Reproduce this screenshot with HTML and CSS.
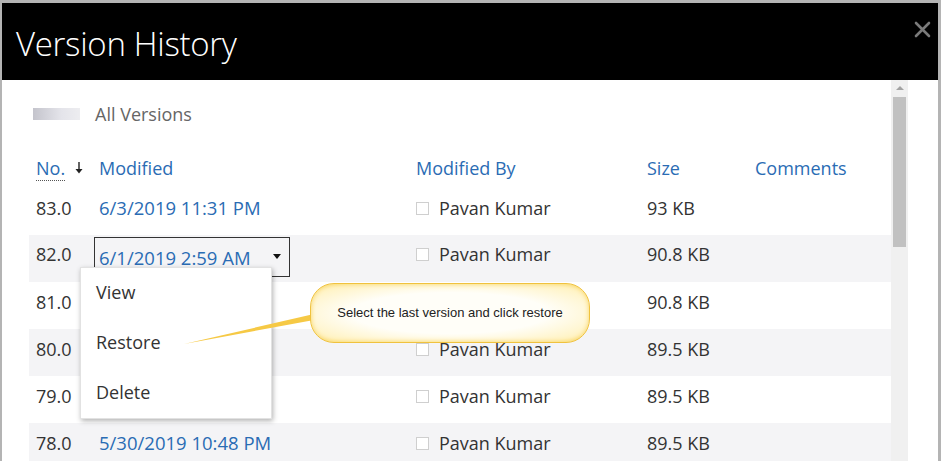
FILE: index.html
```html
<!DOCTYPE html>
<html lang="en">
<head>
    <meta charset="UTF-8">
    <meta name="viewport" content="width=device-width, initial-scale=1.0">
    <title>Version History</title>
    <link rel="stylesheet" href="styles.css">
</head>
<body>
    <div class="dialog">
        <div class="dialog-header">
            <h1>Version History</h1>
            <span class="close">
                <svg width="17" height="17" viewBox="0 0 17 17"><path d="M2 2 L15 15 M15 2 L2 15" stroke="#7a7a7a" stroke-width="2.6" stroke-linecap="round"/></svg>
            </span>
        </div>

        <div class="dialog-body">
            <div class="content">
                <div class="filter">
                    <span class="blur"></span>
                    <span>All Versions</span>
                </div>

                <div class="grid">
                    <div class="row head">
                        <div class="cell no"><span class="abbr">No.</span>
                            <svg class="sort" width="8" height="12" viewBox="0 0 8 12"><path d="M4 0 V10" stroke="#222" stroke-width="1.4"/><path d="M0.5 7 L4 11.5 L7.5 7 Z" fill="#222"/></svg>
                        </div>
                        <div class="cell date">Modified</div>
                        <div class="cell by">Modified By</div>
                        <div class="cell size">Size</div>
                        <div class="cell comments">Comments</div>
                    </div>

                    <div class="row">
                        <div class="cell no">83.0</div>
                        <div class="cell date"><a>6/3/2019 11:31 PM</a></div>
                        <div class="cell by"><span class="check"></span>Pavan Kumar</div>
                        <div class="cell size">93 KB</div>
                        <div class="cell comments"></div>
                    </div>

                    <div class="row alt open">
                        <div class="cell no">82.0</div>
                        <div class="cell date">
                            <div class="picker"><a>6/1/2019 2:59 AM</a><span class="caret"></span></div>
                        </div>
                        <div class="cell by"><span class="check"></span>Pavan Kumar</div>
                        <div class="cell size">90.8 KB</div>
                        <div class="cell comments"></div>

                        <div class="menu">
                            <div class="menu-item">View</div>
                            <div class="menu-item">Restore</div>
                            <div class="menu-item">Delete</div>
                        </div>
                    </div>

                    <!-- date and author of this row sit under the menu and the note -->
                    <div class="row">
                        <div class="cell no">81.0</div>
                        <div class="cell date"></div>
                        <div class="cell by"></div>
                        <div class="cell size">90.8 KB</div>
                        <div class="cell comments"></div>
                    </div>

                    <div class="row alt">
                        <div class="cell no">80.0</div>
                        <div class="cell date"></div>
                        <div class="cell by"><span class="check"></span>Pavan Kumar</div>
                        <div class="cell size">89.5 KB</div>
                        <div class="cell comments"></div>
                    </div>

                    <div class="row">
                        <div class="cell no">79.0</div>
                        <div class="cell date"></div>
                        <div class="cell by"><span class="check"></span>Pavan Kumar</div>
                        <div class="cell size">89.5 KB</div>
                        <div class="cell comments"></div>
                    </div>

                    <div class="row alt">
                        <div class="cell no">78.0</div>
                        <div class="cell date"><a>5/30/2019 10:48 PM</a></div>
                        <div class="cell by"><span class="check"></span>Pavan Kumar</div>
                        <div class="cell size">89.5 KB</div>
                        <div class="cell comments"></div>
                    </div>
                </div>
            </div>

            <div class="scrollbar">
                <div class="scroll-up"></div>
                <div class="thumb"></div>
            </div>
            <div class="gutter"></div>
        </div>

        <!-- annotation added on top of the screenshot -->
        <svg class="tail" width="132" height="36" viewBox="0 0 132 36">
            <path d="M0 32 L130 2 L130 8 Z" fill="#f6c945"/>
        </svg>
        <div class="callout">Select the last version and click restore</div>
    </div>
</body>
</html>
```

FILE: styles.css
```css
html, body {
    margin: 0;
    height: 100%;
    overflow: hidden;
}
body {
    background-color: #fff;
    font-family: "Segoe UI", "Open Sans", sans-serif;
}
.dialog {
    position: relative;
    width: 936px;
    height: 458px;
    overflow: hidden;
    border-top: 3px solid #b4b4b4;
    border-left: 2px solid #b4b4b4;
    border-right: 3px solid #b4b4b4;
}
.dialog-header {
    height: 77px;
    background: #000;
    color: #fff;
    position: relative;
}
.dialog-header h1 {
    margin: 0;
    padding: 21px 0 0 14px;
    font-size: 33px;
    font-weight: 300;
    line-height: 40px;
    letter-spacing: -0.3px;
}
.close {
    position: absolute;
    top: 18px;
    right: 7px;
    width: 17px;
    height: 17px;
}
.dialog-body {
    display: flex;
    height: 381px;
}
.content {
    width: 889px;
    padding-top: 22px;
}
.filter {
    display: flex;
    align-items: center;
    height: 24px;
    padding-left: 31px;
    font-size: 18px;
    color: #666;
}
.blur {
    width: 47px;
    height: 12px;
    margin-right: 15px;
    background: linear-gradient(to right, #c4c4cc, #e4e4ea 60%, #ededf0);
    filter: blur(0.6px);
}
.grid {
    margin: 24px 0 0 27px;
    font-size: 18px;
    color: #333;
}
.row {
    display: flex;
    height: 47px;
    position: relative;
}
.row.alt {
    background: #f4f4f6;
}
.row.head {
    height: 38px;
    color: #2a6cb4;
}
.cell {
    padding-top: 8px;
    line-height: 24px;
    white-space: nowrap;
    box-sizing: border-box;
}
.head .cell {
    padding-top: 6px;
}
.open .cell {
    padding-top: 7px;
}
.no {
    width: 70px;
    padding-left: 7px;
}
.date {
    width: 317px;
}
.date a {
    color: #2a6cb4;
    font-size: 18.5px;
}
.by {
    width: 231px;
    display: flex;
    align-items: flex-start;
}
.size {
    width: 108px;
}
.comments {
    flex: 1;
}
.abbr {
    border-bottom: 1px dotted #555;
}
.sort {
    margin-left: 5px;
    vertical-align: 1px;
}
.check {
    width: 11px;
    height: 11px;
    border: 1px solid #cfcfcf;
    background: #fff;
    margin: 6px 10px 0 0;
    flex-shrink: 0;
}
.picker {
    position: relative;
    width: 196px;
    height: 40px;
    box-sizing: border-box;
    margin: -5px 0 0 -5px;
    padding: 8px 0 0 4px;
    border: 1px solid #333;
}
.caret {
    position: absolute;
    right: 8px;
    top: 16px;
    border-left: 4px solid transparent;
    border-right: 4px solid transparent;
    border-top: 5px solid #111;
}
.menu {
    position: absolute;
    left: 51px;
    top: 32px;
    width: 190px;
    background: #fff;
    border: 1px solid #e2e2e2;
    box-shadow: 1px 2px 5px rgba(0, 0, 0, 0.3);
    z-index: 5;
}
.menu-item {
    height: 50px;
    line-height: 48px;
    padding-left: 15px;
    color: #333;
}
.scrollbar {
    width: 17px;
    background: #f0f0f0;
}
.scroll-up {
    height: 17px;
    position: relative;
}
.scroll-up::after {
    content: "";
    position: absolute;
    left: 5px;
    top: 6px;
    border-left: 4px solid transparent;
    border-right: 4px solid transparent;
    border-bottom: 4px solid #a3a3a3;
}
.thumb {
    height: 150px;
    margin: 0 2px;
    background: #c1c1c1;
}
.gutter {
    flex: 1;
    background: #fff;
}
.tail {
    position: absolute;
    left: 182px;
    top: 309px;
    z-index: 10;
}
.callout {
    position: absolute;
    left: 308px;
    top: 280px;
    width: 278px;
    height: 58px;
    border: 1px solid #f0c23e;
    border-radius: 24px;
    background: radial-gradient(ellipse at center, #fffef8 50%, #fff3c4 85%, #fde38a 100%);
    box-shadow: inset 0 0 5px #f8d563;
    font-family: "Liberation Sans", Arial, sans-serif;
    font-size: 13px;
    color: #222;
    text-align: center;
    line-height: 58px;
    z-index: 10;
}
```
